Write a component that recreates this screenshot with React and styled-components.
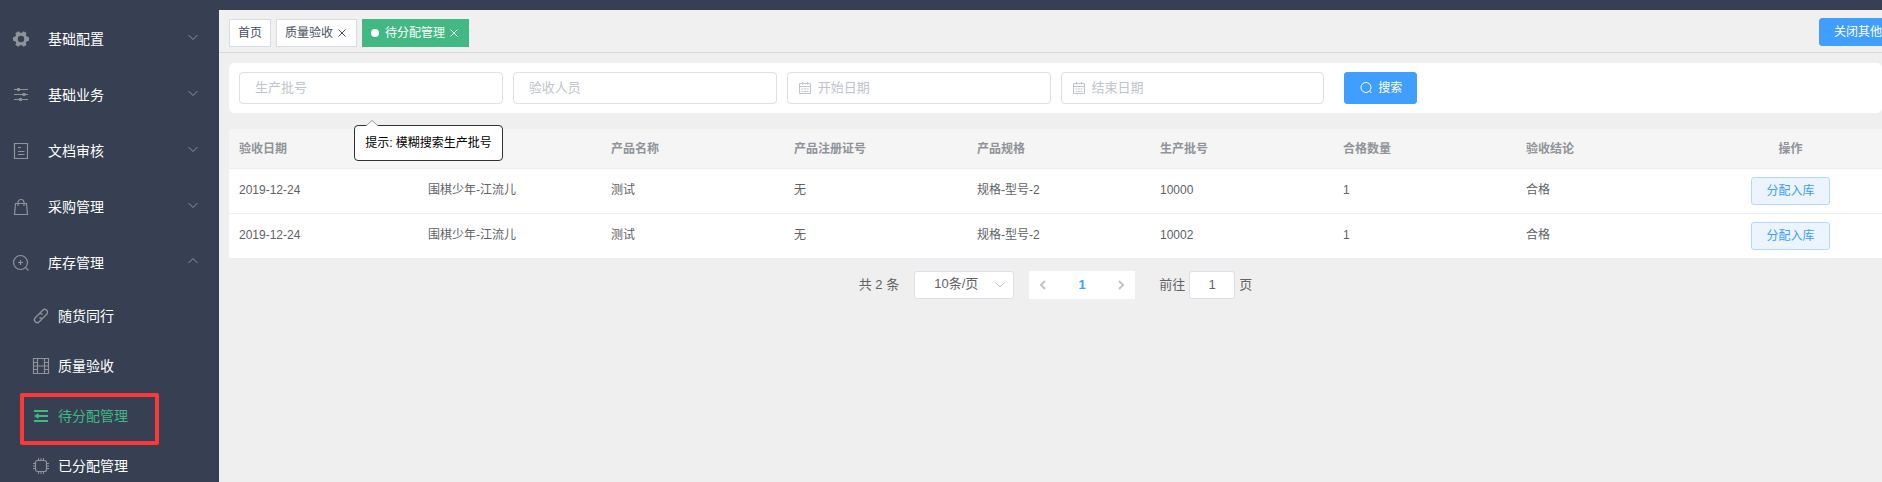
import React from "react";
import styled, { createGlobalStyle, css } from "styled-components";

const GlobalStyle = createGlobalStyle`
  *, *::before, *::after { box-sizing: border-box; }
  body {
    margin: 0;
    background: #efefef;
    color: #606266;
    font-family: "Liberation Sans", "Noto Sans CJK SC", sans-serif;
    font-size: 12px;
    line-height: 20px;
  }
  button, input, select { font-family: inherit; line-height: inherit; }
`;

const Page = styled.div`
  display: flex;
  flex-direction: column;
  height: 100vh;
  overflow: hidden;
`;

const TopBar = styled.header`
  flex: none;
  height: 10px;
  background: #364052;
`;

const Body = styled.div`
  flex: 1;
  display: flex;
  min-height: 0;
`;

const Sidebar = styled.nav`
  flex: none;
  width: 219px;
  padding-top: 1px;
  overflow: hidden;
  background: #364052;
`;

const MenuItem = styled.button`
  display: flex;
  align-items: center;
  width: 100%;
  height: 56px;
  padding: 0 20px 0 12px;
  border: 0;
  background: none;
  color: #fff;
  font-size: 14px;
  text-align: left;
  cursor: pointer;
`;

const MenuLabel = styled.span`
  flex: 1;
  margin-left: 18px;
`;

const MenuArrow = styled.svg`
  width: 12px;
  height: 12px;
  margin-bottom: 4px;
  fill: none;
  stroke: #909399;
`;

const Icon = styled.svg`
  flex: none;
  width: 18px;
  height: 18px;
  fill: none;
  stroke: currentColor;
  color: ${(p) => p.$color || "#909399"};
`;

const SubItem = styled.a`
  position: relative;
  display: flex;
  align-items: center;
  gap: 8px;
  height: 50px;
  padding-left: 32px;
  color: ${(p) => (p.$active ? "#42b983" : "#fff")};
  font-size: 14px;
  text-decoration: none;
`;

const Highlight = styled.span`
  position: absolute;
  top: 2px;
  bottom: -4px;
  left: 20px;
  width: 139px;
  border: 4px solid #fd3838;
  border-radius: 2px;
  pointer-events: none;
`;

const Main = styled.main`
  flex: 1;
  min-width: 0;
`;

const TabBar = styled.div`
  display: flex;
  align-items: flex-start;
  height: 43px;
  padding: 8px 0 0 10px;
  border-bottom: 1px solid #d9d9d9;
  background: #f0f0f0;
  overflow: hidden;
`;

const Tabs = styled.div`
  flex: 1;
  display: flex;
  gap: 5px;
  padding-top: 1px;
`;

const Tab = styled.a`
  display: flex;
  align-items: center;
  gap: 4px;
  height: 28px;
  padding: 0 8px;
  border: 1px solid ${(p) => (p.$active ? "#42b983" : "#d8dce5")};
  background: ${(p) => (p.$active ? "#42b983" : "#fff")};
  color: ${(p) => (p.$active ? "#fff" : "#495060")};
  text-decoration: none;
`;

const Dot = styled.span`
  width: 8px;
  height: 8px;
  margin-right: 2px;
  border-radius: 50%;
  background: #fff;
`;

const CloseMark = styled.svg`
  width: 10px;
  height: 10px;
  margin-right: 1px;
  fill: none;
  stroke: currentColor;
`;

const TabActions = styled.div`
  flex: none;
  display: flex;
  width: 63px;
`;

const buttonKinds = {
  primary: css`
    border-color: #409eff;
    background: #409eff;
    color: #fff;
  `,
  plain: css`
    border-color: #b3d8ff;
    background: #ecf5ff;
    color: #409eff;
  `,
};

const Button = styled.button`
  flex: none;
  display: inline-flex;
  align-items: center;
  justify-content: center;
  gap: 5px;
  height: ${(p) => (p.$tall ? 32 : 28)}px;
  padding: 0 14px;
  border: 1px solid;
  border-radius: 3px;
  font-size: 12px;
  white-space: nowrap;
  vertical-align: middle;
  cursor: pointer;
  ${(p) => buttonKinds[p.$kind]}
`;

const SearchPanel = styled.form`
  display: grid;
  grid-template-columns: repeat(6, 1fr);
  gap: 10px;
  margin: 10px 0 16px 10px;
  padding: 9px 10px;
  border-radius: 5px;
  background: #fff;
`;

const Field = styled.div`
  position: relative;
  display: flex;
  align-items: center;
  gap: 6px;
  height: 32px;
  padding: 0 ${(p) => (p.$dated ? 10 : 15)}px;
  border: 1px solid #dcdfe6;
  border-radius: 4px;
  background: #fff;
`;

const TextInput = styled.input`
  flex: 1;
  min-width: 0;
  height: 30px;
  padding: 0 0 2px;
  border: 0;
  outline: 0;
  background: none;
  color: #606266;
  font-size: 13px;
  &::placeholder { color: #c0c4cc; opacity: 1; }
`;

const SmallIcon = styled.svg`
  flex: none;
  width: 14px;
  height: 14px;
  fill: none;
  stroke: ${(p) => p.$color};
`;

const SearchCell = styled.div`
  display: flex;
  padding-left: 10px;
`;

const Tooltip = styled.div`
  position: absolute;
  z-index: 2;
  top: 52px;
  right: -1px;
  height: 36px;
  padding: 0 10px;
  border: 1px solid #303133;
  border-radius: 4px;
  background: #fff;
  color: #000;
  line-height: 34px;
  white-space: nowrap;
`;

const TooltipArrow = styled.svg`
  position: absolute;
  top: -6px;
  left: 11px;
  width: 12px;
  height: 6px;
`;

const Table = styled.table`
  width: calc(100% - 10px);
  margin-left: 10px;
  border-collapse: separate;
  border-spacing: 0;
  table-layout: fixed;
  background: #fff;
`;

const FirstCol = styled.col`
  width: 189px;
`;

const Th = styled.th`
  height: 40px;
  padding: 0 10px;
  border-bottom: 1px solid #ebeef5;
  background: #f5f5f5;
  color: #909399;
  font-weight: 700;
  text-align: ${(p) => (p.$center ? "center" : "left")};
`;

const Td = styled.td`
  height: 45px;
  padding: 0 10px ${(p) => (p.$center ? 0 : 2)}px;
  border-bottom: 1px solid #ebeef5;
  text-align: ${(p) => (p.$center ? "center" : "left")};
`;

const Pagination = styled.div`
  display: flex;
  align-items: center;
  justify-content: center;
  gap: 15px;
  margin: 12px 0 0 10px;
  font-size: 13px;
`;

const SizeBox = styled.div`
  display: flex;
  align-items: center;
  width: 100px;
  height: 28px;
  padding-right: 6px;
  border: 1px solid #dcdfe6;
  border-radius: 3px;
  background: #fff;
`;

const SizeSelect = styled.select`
  flex: 1;
  height: 26px;
  padding: 0 0 2px 19px;
  border: 0;
  outline: 0;
  appearance: none;
  background: none;
  color: #606266;
  font-size: 13px;
`;

const Pager = styled.div`
  display: flex;
  height: 28px;
  background: #fff;
`;

const PagerButton = styled.button`
  display: flex;
  align-items: center;
  justify-content: center;
  width: ${(p) => (p.$current ? 50 : 28)}px;
  padding: 0;
  border: 0;
  background: none;
  color: #409eff;
  font-size: 13px;
  font-weight: 700;
`;

const Jump = styled.label`
  display: flex;
  align-items: center;
  gap: 4px;
  margin-left: 9px;
`;

const JumpInput = styled.input`
  width: 46px;
  height: 28px;
  padding: 0 0 2px;
  border: 1px solid #dcdfe6;
  border-radius: 3px;
  outline: 0;
  background: #fff;
  color: #606266;
  font-size: 13px;
  text-align: center;
`;

const gearTeeth = [30, 90, 150, 210, 270, 330];

const glyphs = {
  gear: (
    <>
      <circle cx="9" cy="9" r="4.700" strokeWidth="3" />
      {gearTeeth.map((a) => (
        <path key={a} d="M7.300 1h3.400l1 3.500H6.300z" fill="currentColor" stroke="none" transform={`rotate(${a} 9 9)`} />
      ))}
    </>
  ),
  sliders: (
    <>
      <path d="M2 3.500h14M2 8.500h14M2 13.500h14" />
      <g fill="currentColor" stroke="none">
        <circle cx="6.500" cy="3.500" r="1.800" />
        <circle cx="12" cy="8.500" r="1.800" />
        <circle cx="8.500" cy="13.500" r="1.800" />
      </g>
    </>
  ),
  doc: <path d="M2.500 1.500h13v15h-13zM6 5.500h3M6 9.500h6.500M6 12.500h6.500" strokeWidth="1.200" />,
  bag: <path d="M3.500 5.500h11l1 11h-13zM6 8V4.500a3 3 0 0 1 6 0V8" strokeWidth="1.200" />,
  zoom: (
    <>
      <circle cx="8.500" cy="8.500" r="7" strokeWidth="1.200" />
      <path d="M13.500 13.500l3 3M8.500 6v5M6 8.500h5" strokeWidth="1.200" />
    </>
  ),
  link: (
    <path
      d="M7.500 6.500l3.200-3.200a2.800 2.800 0 0 1 4 4L11.500 10.500a2.800 2.800 0 0 1-4 0M10.500 11.500l-3.200 3.200a2.800 2.800 0 0 1-4-4L6.500 7.500a2.800 2.800 0 0 1 4 0"
      strokeWidth="1.300"
    />
  ),
  film: (
    <path
      d="M1.500 1.500h15v15h-15zM5.500 1.500v15M12.500 1.500v15M5.500 9h7M1.500 5.500h4M1.500 9h4M1.500 12.500h4M12.500 5.500h4M12.500 9h4M12.500 12.500h4"
      strokeWidth="1.200"
    />
  ),
  fold: (
    <>
      <path d="M2 4h14M6 9h10M2 14h14" strokeWidth="2" />
      <path d="M6.500 6v6L2 9z" fill="currentColor" stroke="none" />
    </>
  ),
  chip: (
    <>
      <rect x="3.500" y="3.500" width="11" height="11" rx="2" strokeWidth="1.200" />
      <path d="M6.500 1v2.500M9 1v2.500M11.500 1v2.500M6.500 14.500V17M9 14.500V17M11.500 14.500V17M1 6.500h2.500M1 9h2.500M1 11.500h2.500M14.500 6.500H17M14.500 9H17M14.500 11.500H17" />
    </>
  ),
};

const menu = [
  { label: "基础配置", icon: "gear" },
  { label: "基础业务", icon: "sliders" },
  { label: "文档审核", icon: "doc" },
  { label: "采购管理", icon: "bag" },
  {
    label: "库存管理",
    icon: "zoom",
    children: [
      { label: "随货同行", icon: "link" },
      { label: "质量验收", icon: "film" },
      { label: "待分配管理", icon: "fold", active: true },
      { label: "已分配管理", icon: "chip" },
    ],
  },
];

const columns = ["验收日期", "", "产品名称", "产品注册证号", "产品规格", "生产批号", "合格数量", "验收结论"];

const rows = [
  ["2019-12-24", "围棋少年-江流儿", "测试", "无", "规格-型号-2", "10000", "1", "合格"],
  ["2019-12-24", "围棋少年-江流儿", "测试", "无", "规格-型号-2", "10002", "1", "合格"],
];

function MenuIcon({ name, color }) {
  return (
    <Icon viewBox="0 0 18 18" $color={color} aria-hidden="true">
      {glyphs[name]}
    </Icon>
  );
}

function Close() {
  return (
    <CloseMark viewBox="0 0 10 10" aria-hidden="true">
      <path d="M1.500 1.500l7 7M8.500 1.500l-7 7" />
    </CloseMark>
  );
}

function CalendarIcon() {
  return (
    <SmallIcon viewBox="0 0 14 14" $color="#c0c4cc" aria-hidden="true">
      <path d="M1.500 2.500h11v10h-11zM1.500 5.500h11M4.500 1v2.500M9.500 1v2.500M3.500 8h2M6 8h2M8.500 8h2M3.500 10.500h2M6 10.500h2M8.500 10.500h2" />
    </SmallIcon>
  );
}

function Chevron({ d, width = 1 }) {
  return (
    <SmallIcon viewBox="0 0 14 14" $color="#c0c4cc" strokeWidth={width} aria-hidden="true">
      <path d={d} />
    </SmallIcon>
  );
}

export default function App() {
  return (
    <Page>
      <GlobalStyle />
      <TopBar />
      <Body>
        <Sidebar>
          {menu.map((item) => (
            <React.Fragment key={item.label}>
              <MenuItem type="button" aria-expanded={Boolean(item.children)}>
                <MenuIcon name={item.icon} />
                <MenuLabel>{item.label}</MenuLabel>
                <MenuArrow viewBox="0 0 12 12" aria-hidden="true">
                  <path d={item.children ? "M1.500 8L6 3.500 10.500 8" : "M1.500 4L6 8.500 10.500 4"} />
                </MenuArrow>
              </MenuItem>
              {item.children?.map((sub) => (
                <SubItem key={sub.label} href="#" $active={sub.active}>
                  <MenuIcon name={sub.icon} color={sub.active && "#42b983"} />
                  {sub.label}
                  {sub.active && <Highlight />}
                </SubItem>
              ))}
            </React.Fragment>
          ))}
        </Sidebar>
        <Main>
          <TabBar>
            <Tabs>
              <Tab href="#">首页</Tab>
              <Tab href="#">
                质量验收
                <Close />
              </Tab>
              <Tab href="#" $active>
                <Dot />
                待分配管理
                <Close />
              </Tab>
            </Tabs>
            <TabActions>
              <Button type="button" $kind="primary">关闭其他</Button>
            </TabActions>
          </TabBar>
          <SearchPanel>
            <Field>
              <TextInput aria-label="生产批号" placeholder="生产批号" />
              <Tooltip role="tooltip">
                <TooltipArrow viewBox="0 0 12 6" aria-hidden="true">
                  <path d="M0 6L6 0.500 12 6" fill="#fff" stroke="#909399" />
                </TooltipArrow>
                提示: 模糊搜索生产批号
              </Tooltip>
            </Field>
            <Field>
              <TextInput aria-label="验收人员" placeholder="验收人员" />
            </Field>
            <Field $dated>
              <CalendarIcon />
              <TextInput aria-label="开始日期" placeholder="开始日期" />
            </Field>
            <Field $dated>
              <CalendarIcon />
              <TextInput aria-label="结束日期" placeholder="结束日期" />
            </Field>
            <SearchCell>
              <Button type="button" $kind="primary" $tall>
                <SmallIcon viewBox="0 0 14 14" $color="#fff" aria-hidden="true">
                  <circle cx="7" cy="6.500" r="5" />
                  <path d="M10.500 10l2 2" />
                </SmallIcon>
                搜索
              </Button>
            </SearchCell>
          </SearchPanel>
          <Table>
            <colgroup>
              <FirstCol />
              <col span={8} />
            </colgroup>
            <thead>
              <tr>
                {columns.map((name) => (
                  <Th key={name} scope="col">{name}</Th>
                ))}
                <Th scope="col" $center>操作</Th>
              </tr>
            </thead>
            <tbody>
              {rows.map((row) => (
                <tr key={row[5]}>
                  {row.map((value, i) => (
                    <Td key={columns[i]}>{value}</Td>
                  ))}
                  <Td $center>
                    <Button type="button" $kind="plain">分配入库</Button>
                  </Td>
                </tr>
              ))}
            </tbody>
          </Table>
          <Pagination>
            <span>共 2 条</span>
            <SizeBox>
              <SizeSelect aria-label="每页条数" defaultValue="10">
                <option value="10">10条/页</option>
              </SizeSelect>
              <Chevron d="M3 5l4 4 4-4" />
            </SizeBox>
            <Pager>
              <PagerButton type="button" aria-label="上一页">
                <Chevron d="M9 3L5 7l4 4" width={2} />
              </PagerButton>
              <PagerButton type="button" $current>1</PagerButton>
              <PagerButton type="button" aria-label="下一页">
                <Chevron d="M5 3l4 4-4 4" width={2} />
              </PagerButton>
            </Pager>
            <Jump>
              前往
              <JumpInput defaultValue="1" />
              页
            </Jump>
          </Pagination>
        </Main>
      </Body>
    </Page>
  );
}
